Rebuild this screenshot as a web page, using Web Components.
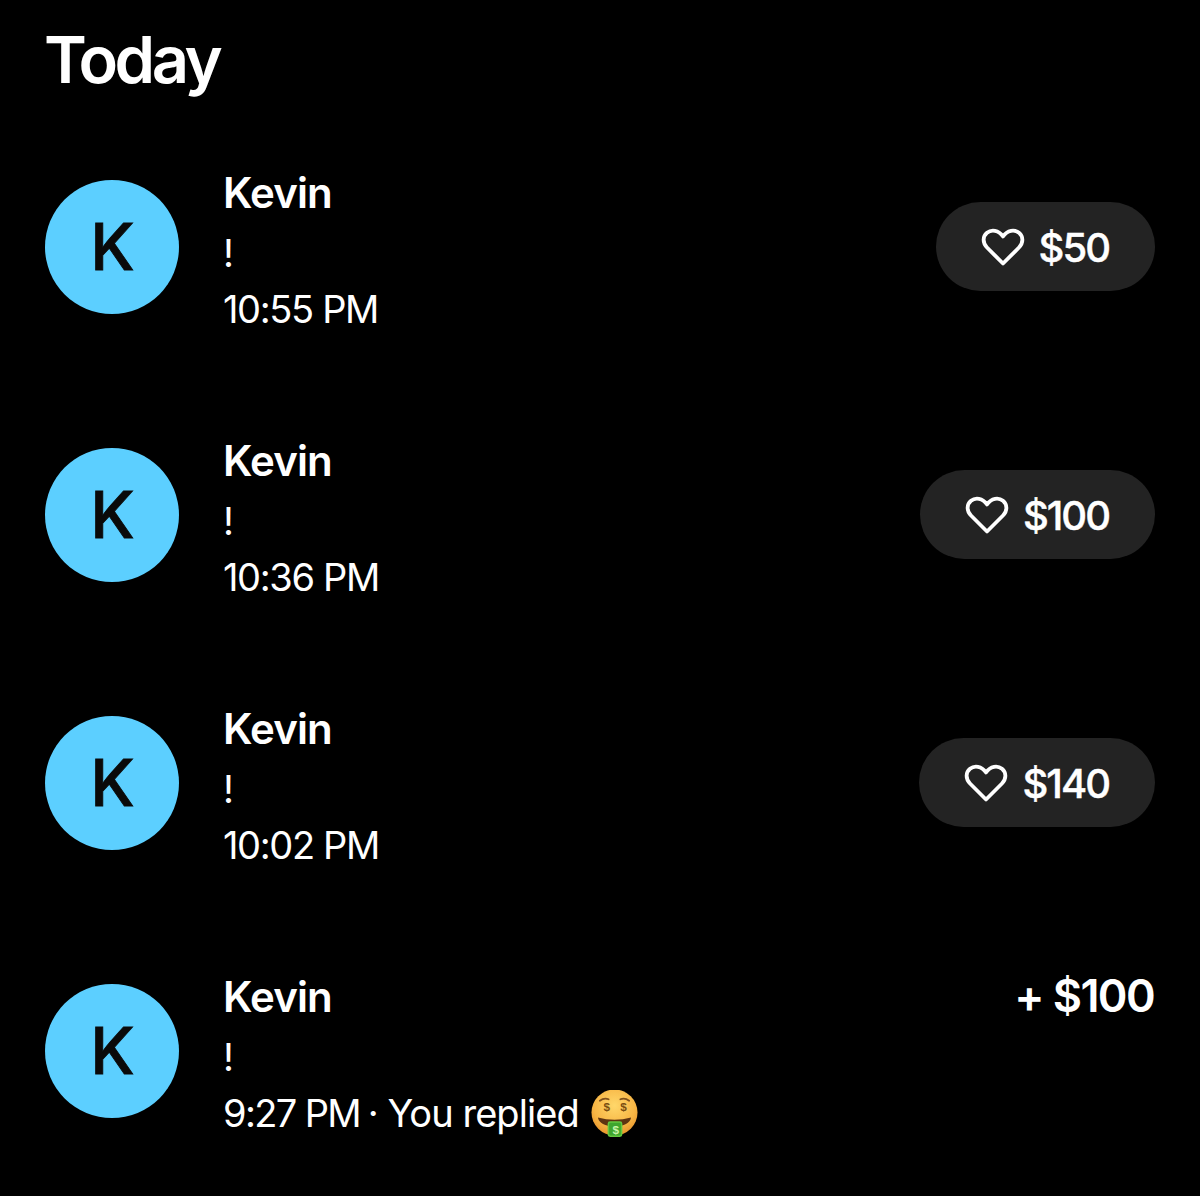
<!DOCTYPE html>
<html lang="en"><head><meta charset="utf-8"><title>Today</title>
<style>
html,body{margin:0;background:#000;}
body{width:1200px;height:1196px;overflow:hidden;font-family:Inter,"Liberation Sans",sans-serif;color:#fff;}
</style></head><body>
<activity-feed heading="Today">
  <activity-row name="Kevin" message="!" time="10:55 PM" tip="$50"></activity-row>
  <activity-row name="Kevin" message="!" time="10:36 PM" tip="$100"></activity-row>
  <activity-row name="Kevin" message="!" time="10:02 PM" tip="$140"></activity-row>
  <activity-row name="Kevin" message="!" time="9:27 PM" note=" · You replied" amount="+ $100" emoji></activity-row>
</activity-feed>
<script>
class ActivityFeed extends HTMLElement{
  constructor(){super();const s=this.attachShadow({mode:'open'});
  s.innerHTML=`<style>
  :host{display:flex;flex-direction:column;padding:0 45px;box-sizing:border-box;width:1200px;height:1196px}
  h1{margin:0;height:179.5px;box-sizing:border-box;padding-top:21px;font-size:65px;line-height:78px;font-weight:600;letter-spacing:-3.4px;color:#fff;margin-left:-1px}
  .list{display:flex;flex-direction:column;gap:134px}
  </style><h1></h1><div class="list"><slot></slot></div>`;
  s.querySelector('h1').textContent=this.getAttribute('heading');}
}
class ActivityRow extends HTMLElement{
  constructor(){super();const s=this.attachShadow({mode:'open'});
  s.innerHTML=`<style>
  :host{display:flex;align-items:center;height:134px;position:relative}
  .av{width:134px;height:134px;border-radius:50%;background:#5ccfff;color:#0a0a0a;display:flex;align-items:center;justify-content:center;font-size:64px;font-weight:500;-webkit-text-stroke:.9px #0a0a0a;flex:none;letter-spacing:-1px}
  .txt{margin-left:45px;flex:1;display:flex;flex-direction:column;height:170px;font-size:38px;letter-spacing:-1.35px;line-height:58px;white-space:pre}
  .n{font-size:42px;font-weight:600;letter-spacing:-.9px;line-height:62px;height:63px;margin-left:-1px}
  .m{height:56px;margin-left:-1px}.t{height:58px;display:flex;align-items:center;margin-left:-1px}
  .tt.tight{letter-spacing:-1.65px}
  .nt{letter-spacing:-.95px;margin-left:-2px}
  .em{width:47px;height:47px;margin-left:12px;flex:none;margin-top:2px}
  .pill{display:inline-flex;align-items:center;height:89px;padding:0 46px 0 45px;border-radius:45px;background:#232323;font-size:40px;font-weight:500;-webkit-text-stroke:.4px #fff;letter-spacing:-2px;gap:14px}
  .pill span{padding-top:2px}
  .pill svg{width:44px;height:40px;flex:none}
  .amt{align-self:flex-start;margin-top:-16px;margin-right:1px;font-size:45px;font-weight:600;letter-spacing:-1.6px;line-height:56px}
  </style>
  <div class="av">K</div>
  <div class="txt"><div class="n"></div><div class="m"></div><div class="t"><span class="tt"></span></div></div>`;
  const g=a=>this.getAttribute(a);
  s.querySelector('.n').textContent=g('name');
  s.querySelector('.m').textContent=g('message');
  const tt=s.querySelector('.tt');
  tt.textContent=g('time');
  if(g('note')){
    tt.classList.add('tight');
    const n=document.createElement('span');n.className='nt';n.textContent=g('note');
    s.querySelector('.t').appendChild(n);
  }
  if(this.hasAttribute('emoji')){
    s.querySelector('.t').insertAdjacentHTML('beforeend',`<svg class="em" viewBox="0 0 48 48" aria-hidden="true">
      <defs><radialGradient id="f" cx="50%" cy="35%" r="65%"><stop offset="0" stop-color="#ffd76a"/><stop offset=".7" stop-color="#f7b544"/><stop offset="1" stop-color="#e8952c"/></radialGradient></defs>
      <circle cx="24" cy="23" r="23.500" fill="url(#f)"/>
      <path d="M9 11q4.500-3.500 9-1.500M30 9.500q4.500-2 9 1.500" fill="none" stroke="#80511c" stroke-width="1.800" stroke-linecap="round"/>
      <g font-family="Liberation Sans,sans-serif" font-size="12" font-weight="700" fill="#7a4f12" text-anchor="middle"><text x="15.500" y="21">$</text><text x="32.500" y="21">$</text></g>
      <path d="M7 28q17 5 34 0q-2 9-17 9T7 28z" fill="#5e3412"/>
      <rect x="17" y="32" width="15" height="16" rx="2.500" fill="#63c83f"/>
      <rect x="18.500" y="33.500" width="12" height="13" rx="1.500" fill="#3fa62e"/>
      <text x="24.500" y="44.500" font-family="Liberation Sans,sans-serif" font-size="12" font-weight="700" fill="#c8f5a8" text-anchor="middle">$</text>
    </svg>`);
  }
  if(g('tip')){
    const p=document.createElement('div');p.className='pill';
    p.innerHTML=`<svg viewBox="0 0 44 40" aria-hidden="true"><path d="M22 36.500 6 20.500C1.500 16 1.500 9.500 6 5.800 10.500 2.200 17.500 3 22 9.500 26.500 3 33.500 2.200 38 5.800 42.500 9.500 42.500 16 38 20.500Z" fill="none" stroke="#fff" stroke-width="3.800" stroke-linejoin="round"/></svg><span></span>`;
    p.querySelector('span').textContent=g('tip');s.appendChild(p);
  }
  if(g('amount')){
    const a=document.createElement('div');a.className='amt';a.textContent=g('amount');s.appendChild(a);
  }
  }
}
customElements.define('activity-feed',ActivityFeed);
customElements.define('activity-row',ActivityRow);
</script>
</body></html>
